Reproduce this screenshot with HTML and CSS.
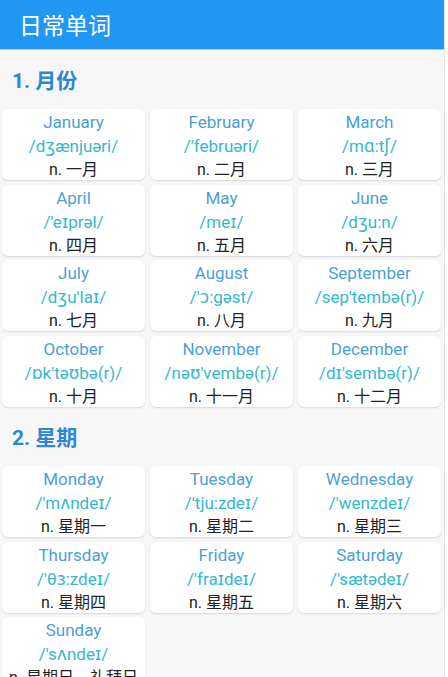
FILE: index.html
```html
<!DOCTYPE html>
<html lang="zh">
<head>
<meta charset="utf-8">
<link rel="stylesheet" href="styles.css">
</head>
<body>
<div class="app">
  <header class="bar"><span class="bar-title">日常单词</span></header>
  <h2 class="sec">1. 月份</h2>
  <div class="grid">
    <div class="card"><div class="w">January</div><div class="p">/dʒænjuəri/</div><div class="m">n. 一月</div></div>
    <div class="card"><div class="w">February</div><div class="p">/'februəri/</div><div class="m">n. 二月</div></div>
    <div class="card"><div class="w">March</div><div class="p">/mɑ:tʃ/</div><div class="m">n. 三月</div></div>
    <div class="card"><div class="w">April</div><div class="p">/'eɪprəl/</div><div class="m">n. 四月</div></div>
    <div class="card"><div class="w">May</div><div class="p">/meɪ/</div><div class="m">n. 五月</div></div>
    <div class="card"><div class="w">June</div><div class="p">/dʒu:n/</div><div class="m">n. 六月</div></div>
    <div class="card"><div class="w">July</div><div class="p">/dʒu'laɪ/</div><div class="m">n. 七月</div></div>
    <div class="card"><div class="w">August</div><div class="p">/'ɔ:gəst/</div><div class="m">n. 八月</div></div>
    <div class="card"><div class="w">September</div><div class="p">/sep'tembə(r)/</div><div class="m">n. 九月</div></div>
    <div class="card"><div class="w">October</div><div class="p">/ɒk'təʊbə(r)/</div><div class="m">n. 十月</div></div>
    <div class="card"><div class="w">November</div><div class="p">/nəʊ'vembə(r)/</div><div class="m">n. 十一月</div></div>
    <div class="card"><div class="w">December</div><div class="p">/dɪ'sembə(r)/</div><div class="m">n. 十二月</div></div>
  </div>
  <h2 class="sec">2. 星期</h2>
  <div class="grid">
    <div class="card"><div class="w">Monday</div><div class="p">/'mʌndeɪ/</div><div class="m">n. 星期一</div></div>
    <div class="card"><div class="w">Tuesday</div><div class="p">/'tju:zdeɪ/</div><div class="m">n. 星期二</div></div>
    <div class="card"><div class="w">Wednesday</div><div class="p">/'wenzdeɪ/</div><div class="m">n. 星期三</div></div>
    <div class="card"><div class="w">Thursday</div><div class="p">/'θɜ:zdeɪ/</div><div class="m">n. 星期四</div></div>
    <div class="card"><div class="w">Friday</div><div class="p">/'fraɪdeɪ/</div><div class="m">n. 星期五</div></div>
    <div class="card"><div class="w">Saturday</div><div class="p">/'sætədeɪ/</div><div class="m">n. 星期六</div></div>
    <div class="card"><div class="w">Sunday</div><div class="p">/'sʌndeɪ/</div><div class="m">n. 星期日，礼拜日</div></div>
  </div>
</div>
</body>
</html>
```
FILE: styles.css
```css
html, body {
  margin: 0;
  padding: 0;
  background: #ffffff;
}
body {
  font-family: Roboto, "Noto Sans CJK SC", "DejaVu Sans", sans-serif;
}
.app {
  width: 444px;
  min-height: 677px;
  background: #f7f7f7;
  border-right: 1px solid #e2e2e2;
}
.bar {
  height: 50px;
  background: #2196f3;
  display: flex;
  align-items: center;
  padding-left: 19px;
  border-bottom: 1px solid #9fd0f8;
  box-sizing: border-box;
}
.bar-title {
  color: #ffffff;
  font-size: 23px;
  font-family: "Noto Sans CJK SC", sans-serif;
  line-height: 1;
}
.sec {
  margin: 0;
  height: 59px;
  display: flex;
  align-items: center;
  padding-left: 12px;
  padding-bottom: 2px;
  box-sizing: border-box;
  font-size: 21px;
  font-weight: bold;
  color: #2a88d4;
  font-family: Roboto, "Noto Sans CJK SC", sans-serif;
}
.grid {
  display: grid;
  grid-template-columns: repeat(3, 1fr);
  column-gap: 5px;
  row-gap: 4.7px;
  padding: 0 3px 0 2px;
}
.card {
  height: 71px;
  background: #ffffff;
  border-radius: 6px;
  box-shadow: 0 1px 2px rgba(0, 0, 0, 0.13);
  text-align: center;
  padding-top: 1px;
  box-sizing: border-box;
  white-space: nowrap;
}
.w {
  font-size: 17px;
  line-height: 24px;
  color: #4c9fd6;
}
.p {
  font-size: 17px;
  line-height: 24px;
  color: #34b9cc;
}
.m {
  font-size: 16px;
  line-height: 24px;
  color: #222222;
  font-family: Roboto, "Noto Sans CJK SC", sans-serif;
}
```
